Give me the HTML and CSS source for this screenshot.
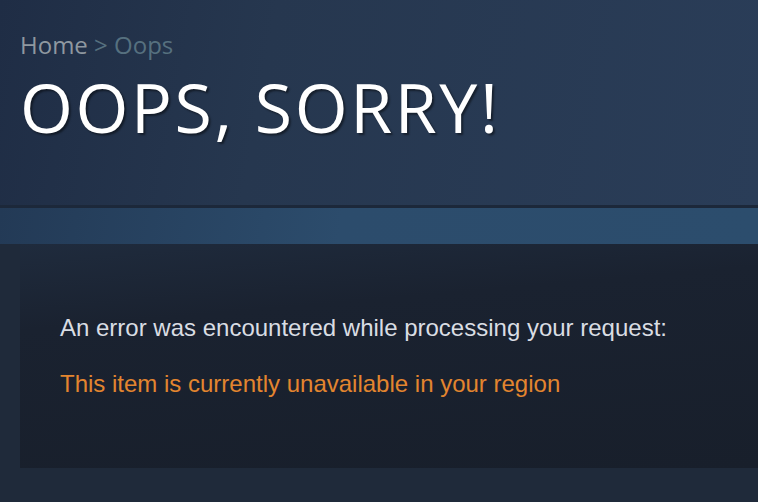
FILE: index.html
```html
<!DOCTYPE html>
<html>
<head>
<meta charset="utf-8">
<link rel="stylesheet" href="styles.css">
</head>
<body>
<div class="page">
  <header class="header">
    <div class="breadcrumbs"><span class="crumb-home">Home</span> <span class="crumb-sep">&gt;</span> <span class="crumb-cur">Oops</span></div>
    <h1 class="title">OOPS, SORRY!</h1>
  </header>
  <div class="divider"></div>
  <div class="band"></div>
  <main class="panel">
    <p class="msg">An error was encountered while processing your request:</p>
    <p class="err">This item is currently unavailable in your region</p>
  </main>
</div>
</body>
</html>
```
FILE: styles.css
```css
html, body {
  margin: 0;
  padding: 0;
  background: #1f2a3a;
}
.page {
  width: 758px;
  height: 502px;
  overflow: hidden;
}
.header {
  height: 205px;
  box-sizing: border-box;
  padding: 31px 0 0 20px;
  background: linear-gradient(100deg, #1f2d45 0%, #26374f 35%, #2a3d58 100%);
  font-family: "Open Sans", sans-serif;
}
.breadcrumbs {
  font-size: 24px;
  line-height: 28px;
  color: #56707f;
}
.crumb-home { color: #8f98a0; }
.title {
  margin: 8px 0 0 0;
  font-weight: 400;
  font-size: 68px;
  line-height: 80px;
  color: #ffffff;
  letter-spacing: 2.6px;
  text-shadow: 2px 2px 2px rgba(0,0,0,0.45);
}
.divider {
  height: 3px;
  background: #1c283a;
}
.band {
  height: 36px;
  background: linear-gradient(100deg, #233a56 0%, #2c4c6c 45%, #2c4d6d 100%);
}
.panel {
  margin-left: 20px;
  height: 224px;
  box-sizing: border-box;
  padding: 70px 0 0 40px;
  background: linear-gradient(175deg, #1f2b3d 0%, #1a2230 30%, #181f2b 100%);
  font-family: "Liberation Sans", Arial, sans-serif;
  font-size: 24px;
}
.msg {
  margin: 0;
  line-height: 28px;
  color: #d9dde3;
}
.err {
  margin: 28px 0 0 0;
  line-height: 28px;
  color: #e3852f;
}
```
